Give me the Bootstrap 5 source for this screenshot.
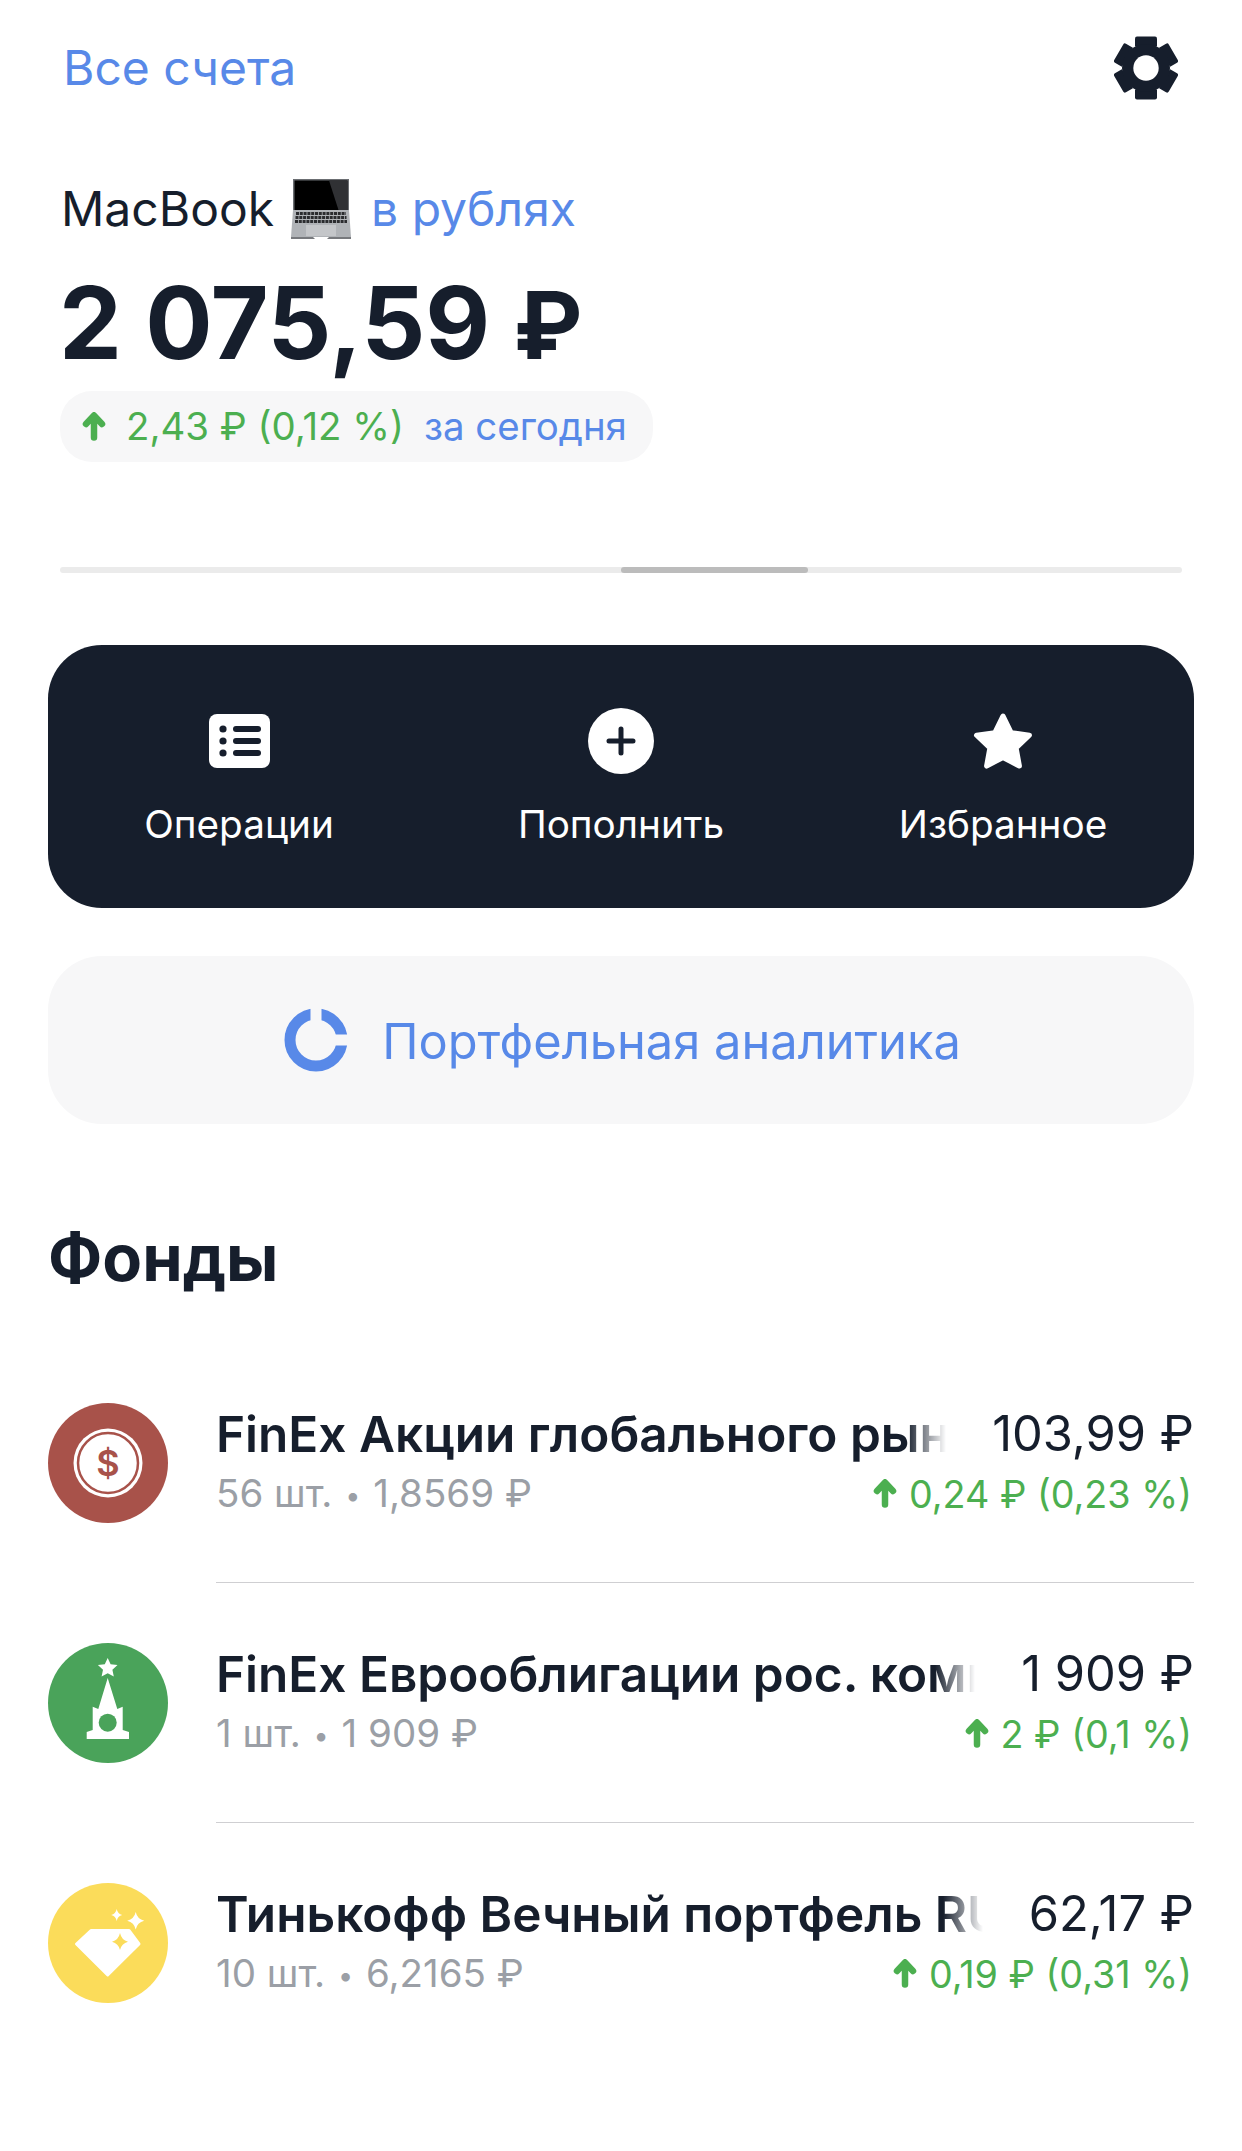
<!DOCTYPE html>
<html lang="ru">
<head>
    <meta charset="UTF-8">
    <meta name="viewport" content="width=device-width, initial-scale=1.0">
    <title>MacBook</title>
    <link href="https://cdn.jsdelivr.net/npm/bootstrap@5.3.0/dist/css/bootstrap.min.css" rel="stylesheet">
    <style>
        body {
            font-family: "Inter", "Liberation Sans", sans-serif;
            color: #161e2c;
            background: #fff;
            overflow: hidden;
        }
        .page-wrap { padding: 0 48px; height: 2151px; }
        .tx-blue { color: #5889e8; }
        .tx-green { color: #4caf50; }
        .top-bar { height: 136px; padding: 0 16px 0 15px; }
        .acc-link { font-size: 48px; }
        .acc-row { margin-top: 43px; padding-left: 13px; font-size: 48px; line-height: 60px; }
        .acc-row svg { margin: 0 20px 0 17px; }
        .total-sum { margin-top: 29px; padding-left: 11px; height: 110px; font-size: 100px; line-height: 110px; font-weight: 700; letter-spacing: -.2px; }
        .total-cur { font-size: 93px; line-height: 0; }
        .day-pill { margin: 13px 0 0 12px; height: 71px; padding: 0 26px 0 22px; background: #f7f7f8; border-radius: 32px; font-size: 38.4px; }
        .day-pill svg { margin-right: 20px; }
        .day-pill .tx-blue { margin-left: 20px; }
        .scroll-track { margin: 105px 12px 0; height: 6px; background: #ebebeb; border-radius: 3px; }
        .scroll-thumb { margin-left: 561px; width: 187px; height: 6px; background: #bcbcbc; border-radius: 3px; }
        .action-box { margin-top: 72px; height: 263px; background: #161e2c; border-radius: 54px; color: #fff; }
        .action-ico { height: 66px; margin-top: 63px; }
        .action-name { margin-top: 27px; font-size: 38.7px; line-height: 46px; }
        .analytics-box { margin-top: 48px; height: 168px; background: #f7f7f8; border-radius: 54px; font-size: 48.8px; gap: 34px; }
        .analytics-box svg { margin-left: 3px; }
        .analytics-box span { padding-top: 3px; }
        .section-head { margin: 98px 0 0 0; font-size: 65px; line-height: 72px; font-weight: 700; }
        .fund-list { margin-top: 49px; }
        .fund-row { height: 240px; gap: 48px; }
        .fund-logo { flex: 0 0 120px; margin-top: 60px; }
        .fund-body { flex: 1 1 auto; min-width: 0; padding-top: 61px; border-bottom: 1px solid #cfcfd2; }
        .fund-row:last-child .fund-body { border-bottom: 0; }
        .fund-line { height: 60px; }
        .fund-title {
            flex: 1 1 auto; min-width: 0; margin-right: 46px;
            font-size: 49.5px; font-weight: 600; white-space: nowrap; overflow: hidden;
            -webkit-mask-image: linear-gradient(to left, transparent 0, #000 40px);
            mask-image: linear-gradient(to left, transparent 0, #000 40px);
        }
        .fund-price { font-size: 48.8px; white-space: nowrap; }
        .fund-sub { font-size: 38.5px; color: #9b9fa6; }
        .dot-sep { font-size: 27px; padding: 0 2px; vertical-align: 2px; }
        .fund-change { font-size: 37.7px; white-space: nowrap; padding-right: 2px; }
        .fund-change svg { margin-right: 12px; }
    </style>
</head>
<body>
<div class="page-wrap">
    <!-- top -->
    <div class="top-bar d-flex justify-content-between align-items-center">
        <span class="tx-blue acc-link">Все счета</span>
        <svg width="64" height="64" viewBox="-32 -32 64 64" fill="#161e2c">
            <g>
                <path d="M-9-31.5h18q2 0 2 2v8h-22v-8q0-2 2-2z"/>
                <path transform="rotate(60)" d="M-9-31.5h18q2 0 2 2v8h-22v-8q0-2 2-2z"/>
                <path transform="rotate(120)" d="M-9-31.5h18q2 0 2 2v8h-22v-8q0-2 2-2z"/>
                <path transform="rotate(180)" d="M-9-31.5h18q2 0 2 2v8h-22v-8q0-2 2-2z"/>
                <path transform="rotate(240)" d="M-9-31.5h18q2 0 2 2v8h-22v-8q0-2 2-2z"/>
                <path transform="rotate(300)" d="M-9-31.5h18q2 0 2 2v8h-22v-8q0-2 2-2z"/>
            </g>
            <circle r="24"/>
            <circle r="12.7" fill="#fff"/>
        </svg>
    </div>

    <!-- account -->
    <div class="acc-row d-flex align-items-center">
        <span>MacBook</span>
        <svg width="60" height="60" viewBox="0 0 60 60">
            <rect x="2" y="0" width="56" height="31" fill="#6b6e72"/>
            <rect x="3.500" y="1.500" width="53" height="29.500" fill="#000"/>
            <path d="M38 1.500h18.500v29.500h-9z" fill="#303134"/>
            <path d="M2 31h56l2 27h-60z" fill="#b0b3b7"/>
            <g fill="none" stroke="#2b2c2f" stroke-width="3" stroke-dasharray="3 .8">
                <path d="M5 34.500h50M4.500 38.500h51M4 42.500h52"/>
            </g>
            <rect x="15" y="46" width="30" height="11" fill="#c4c6c9"/>
            <path d="M0 58h22l2 2h12l2-2h22v2h-60z" fill="#77797d"/>
        </svg>
        <span class="tx-blue">в рублях</span>
    </div>
    <div class="total-sum">2 075,59 <span class="total-cur">₽</span></div>
    <div class="day-pill d-inline-flex align-items-center">
        <svg width="24" height="29" viewBox="0 0 24 29"><path d="M12 3.500L4 12M12 3.500l8 8.500M12 4v21.500" fill="none" stroke="#4caf50" stroke-width="6.500" stroke-linecap="round" stroke-linejoin="round"/></svg>
        <span class="tx-green">2,43 ₽ (0,12 %)</span>
        <span class="tx-blue">за сегодня</span>
    </div>

    <div class="scroll-track"><div class="scroll-thumb"></div></div>

    <!-- actions -->
    <div class="action-box row g-0 text-center">
        <div class="col-4">
            <div class="action-ico d-flex justify-content-center align-items-center">
                <svg width="61" height="54" viewBox="0 0 61 54">
                    <rect width="61" height="54" rx="8" fill="#fff"/>
                    <g fill="#161e2c">
                        <circle cx="14" cy="15" r="3.600"/><circle cx="14" cy="27" r="3.600"/><circle cx="14" cy="39" r="3.600"/>
                        <rect x="24" y="12" width="28" height="6" rx="3"/><rect x="24" y="24" width="28" height="6" rx="3"/><rect x="24" y="36" width="28" height="6" rx="3"/>
                    </g>
                </svg>
            </div>
            <div class="action-name">Операции</div>
        </div>
        <div class="col-4">
            <div class="action-ico d-flex justify-content-center align-items-center">
                <svg width="66" height="66" viewBox="0 0 66 66">
                    <circle cx="33" cy="33" r="33" fill="#fff"/>
                    <path d="M33 21v24M21 33h24" stroke="#161e2c" stroke-width="5" stroke-linecap="round"/>
                </svg>
            </div>
            <div class="action-name">Пополнить</div>
        </div>
        <div class="col-4">
            <div class="action-ico d-flex justify-content-center align-items-center">
                <svg width="60" height="56" viewBox="1 1 58 54">
                    <path d="M30 4l7.800 16 17.700 2.400-12.900 12.300 3.200 17.500L30 43.800l-15.800 8.400 3.200-17.500L4.500 22.400 22.200 20z" fill="#fff" stroke="#fff" stroke-width="5" stroke-linejoin="round"/>
                </svg>
            </div>
            <div class="action-name">Избранное</div>
        </div>
    </div>

    <!-- analytics -->
    <div class="analytics-box d-flex justify-content-center align-items-center">
        <svg width="64" height="64" viewBox="-32 -32 64 64">
            <circle r="26" fill="none" stroke="#5889e8" stroke-width="11"/>
            <rect x="-5.500" y="-33" width="11" height="20" fill="#f7f7f8"/>
            <rect x="13" y="-5.500" width="20" height="11" fill="#f7f7f8"/>
        </svg>
        <span class="tx-blue">Портфельная аналитика</span>
    </div>

    <div class="section-head">Фонды</div>

    <!-- funds -->
    <div class="fund-list">
        <div class="fund-row d-flex">
            <svg class="fund-logo" width="120" height="120" viewBox="0 0 120 120">
                <circle cx="60" cy="60" r="60" fill="#a8524a"/>
                <circle cx="60" cy="60" r="34.500" fill="#fff"/>
                <circle cx="60" cy="60" r="30" fill="none" stroke="#a8524a" stroke-width="2.500"/>
                <text x="60" y="73" text-anchor="middle" font-family="Inter" font-weight="600" font-size="36" fill="#a8524a">$</text>
            </svg>
            <div class="fund-body">
                <div class="fund-line d-flex align-items-center">
                    <div class="fund-title">FinEx Акции глобального рынка акций</div>
                    <div class="fund-price">103,99 ₽</div>
                </div>
                <div class="fund-line d-flex justify-content-between align-items-center">
                    <div class="fund-sub">56 шт. <span class="dot-sep">•</span> 1,8569 ₽</div>
                    <div class="fund-change tx-green d-flex align-items-center">
                        <svg width="24" height="29" viewBox="0 0 24 29"><path d="M12 3.500L4 12M12 3.500l8 8.500M12 4v21.500" fill="none" stroke="#4caf50" stroke-width="6.500" stroke-linecap="round" stroke-linejoin="round"/></svg>
                        0,24 ₽ (0,23 %)
                    </div>
                </div>
            </div>
        </div>
        <div class="fund-row d-flex">
            <svg class="fund-logo" width="120" height="120" viewBox="0 0 120 120">
                <circle cx="60" cy="60" r="60" fill="#4aa35a"/>
                <path d="M59.700 15l2.900 6.300 6.900.8-5.100 4.700 1.400 6.800-6.100-3.400-6.100 3.400 1.400-6.800-5.100-4.700 6.900-.8z" fill="#fff"/>
                <path d="M59.700 35L69.300 66l5.400-2.300V87l6.300 2v7H38.700v-7l6-2V63.700l5.600 2.300z" fill="#fff"/>
                <circle cx="59.700" cy="79.700" r="9" fill="#4aa35a"/>
            </svg>
            <div class="fund-body">
                <div class="fund-line d-flex align-items-center">
                    <div class="fund-title">FinEx Еврооблигации рос. компаний</div>
                    <div class="fund-price">1 909 ₽</div>
                </div>
                <div class="fund-line d-flex justify-content-between align-items-center">
                    <div class="fund-sub">1 шт. <span class="dot-sep">•</span> 1 909 ₽</div>
                    <div class="fund-change tx-green d-flex align-items-center">
                        <svg width="24" height="29" viewBox="0 0 24 29"><path d="M12 3.500L4 12M12 3.500l8 8.500M12 4v21.500" fill="none" stroke="#4caf50" stroke-width="6.500" stroke-linecap="round" stroke-linejoin="round"/></svg>
                        2 ₽ (0,1 %)
                    </div>
                </div>
            </div>
        </div>
        <div class="fund-row d-flex">
            <svg class="fund-logo" width="120" height="120" viewBox="0 0 120 120">
                <circle cx="60" cy="60" r="60" fill="#fbdc5a"/>
                <path d="M43 47.500H81L91 61 59.700 92 28.500 61z" fill="#fff" stroke="#fff" stroke-width="3" stroke-linejoin="round"/>
                <path d="M72 50q1.500 7 8 8.700q-6.500 1.700-8 8.300q-1.500-6.600-8-8.300q6.500-1.700 8-8.700z" fill="#fbdc5a"/>
                <path d="M68.700 26q1 5 5.500 6q-4.500 1-5.500 6q-1-5-5.500-6q4.500-1 5.500-6z" fill="#fff"/>
                <path d="M87.700 29q1.500 7 8.500 8.700q-7 1.700-8.500 8.800q-1.500-7.100-8.500-8.800q7-1.700 8.500-8.700z" fill="#fff"/>
            </svg>
            <div class="fund-body">
                <div class="fund-line d-flex align-items-center">
                    <div class="fund-title">Тинькофф Вечный портфель RUB</div>
                    <div class="fund-price">62,17 ₽</div>
                </div>
                <div class="fund-line d-flex justify-content-between align-items-center">
                    <div class="fund-sub">10 шт. <span class="dot-sep">•</span> 6,2165 ₽</div>
                    <div class="fund-change tx-green d-flex align-items-center">
                        <svg width="24" height="29" viewBox="0 0 24 29"><path d="M12 3.500L4 12M12 3.500l8 8.500M12 4v21.500" fill="none" stroke="#4caf50" stroke-width="6.500" stroke-linecap="round" stroke-linejoin="round"/></svg>
                        0,19 ₽ (0,31 %)
                    </div>
                </div>
            </div>
        </div>
    </div>
</div>
<script src="https://cdn.jsdelivr.net/npm/bootstrap@5.3.0/dist/js/bootstrap.bundle.min.js"></script>
</body>
</html>
